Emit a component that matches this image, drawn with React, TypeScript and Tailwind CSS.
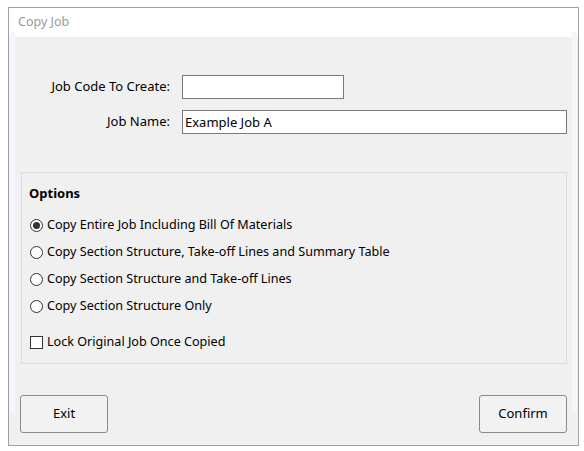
import React, { useState } from "react";

const font = { fontFamily: '"Noto Sans", "Segoe UI", sans-serif' };

function Radio({ checked, label, onClick }: { checked: boolean; label: string; onClick: () => void }) {
  return (
    <div className="flex h-[27px] cursor-default items-center" onClick={onClick}>
      <span className="ml-[1px] flex h-[13px] w-[13px] items-center justify-center rounded-full border border-[#333333] bg-white">
        {checked && <span className="h-[7px] w-[7px] rounded-full bg-[#333333]" />}
      </span>
      <span className="ml-[4px] text-[12.6px] text-black">{label}</span>
    </div>
  );
}

export default function App() {
  const [option, setOption] = useState(0);
  const [lock, setLock] = useState(false);
  const [code, setCode] = useState("");
  const [name, setName] = useState("Example Job A");

  const options = [
    "Copy Entire Job Including Bill Of Materials",
    "Copy Section Structure, Take-off Lines and Summary Table",
    "Copy Section Structure and Take-off Lines",
    "Copy Section Structure Only",
  ];

  return (
    <div className="h-[451px] w-[584px] bg-white pl-[8px] pt-[7px]" style={font}>
      <div className="flex h-[439px] w-[571px] flex-col border border-[#a0a0a0] bg-white">
        {/* title */}
        <div className="flex h-[29px] items-center pl-[9px] text-[12.5px] text-[#9a9a9a]">Copy Job</div>

        <div className="relative flex flex-1 flex-col bg-[#f0f0f0]">
          <div className="absolute left-[1px] top-[-5px] h-[381px] w-[5px] bg-[#f3f6fb]" />
          <div className="absolute right-[1px] top-[-5px] h-[381px] w-[5px] bg-[#f3f6fb]" />

          {/* fields */}
          <div className="mt-[38px] flex items-center">
            <label className="w-[161px] text-right text-[13px] text-black">Job Code To Create:</label>
            <input
              value={code}
              onChange={(e) => setCode(e.target.value)}
              className="ml-[12px] h-[24px] w-[162px] border border-[#7a7a7a] bg-white px-[3px] text-[13px] text-black outline-none"
            />
          </div>
          <div className="mt-[11px] flex items-center">
            <label className="w-[161px] text-right text-[13px] text-black">Job Name:</label>
            <input
              value={name}
              onChange={(e) => setName(e.target.value)}
              className="ml-[12px] h-[24px] w-[385px] border border-[#7a7a7a] bg-white px-[2px] text-[13px] text-black outline-none"
            />
          </div>

          {/* options */}
          <div className="ml-[12px] mt-[38px] h-[192px] w-[546px] border border-[#dcdcdc] px-[7px]">
            <div className="mt-[11px] text-[13px] font-bold text-black">Options</div>
            <div className="mt-[8px] flex flex-col">
              {options.map((o, i) => (
                <Radio key={o} checked={option === i} label={o} onClick={() => setOption(i)} />
              ))}
            </div>
            <div className="mt-[13px] flex h-[20px] cursor-default items-center" onClick={() => setLock(!lock)}>
              <span className="ml-[1px] flex h-[13px] w-[13px] items-center justify-center border border-[#333333] bg-white text-[10px] leading-none">
                {lock ? "✓" : ""}
              </span>
              <span className="ml-[4px] text-[12.6px] text-black">Lock Original Job Once Copied</span>
            </div>
          </div>

          {/* buttons */}
          <div className="mt-[31px] flex justify-between px-[11px]">
            <button className="h-[38px] w-[88px] rounded-[3px] border border-[#8a8a8a] bg-[#f2f2f2] text-[13px] text-black">
              Exit
            </button>
            <button className="h-[38px] w-[88px] rounded-[3px] border border-[#8a8a8a] bg-[#f2f2f2] text-[13px] text-black">
              Confirm
            </button>
          </div>
        </div>
      </div>
    </div>
  );
}
